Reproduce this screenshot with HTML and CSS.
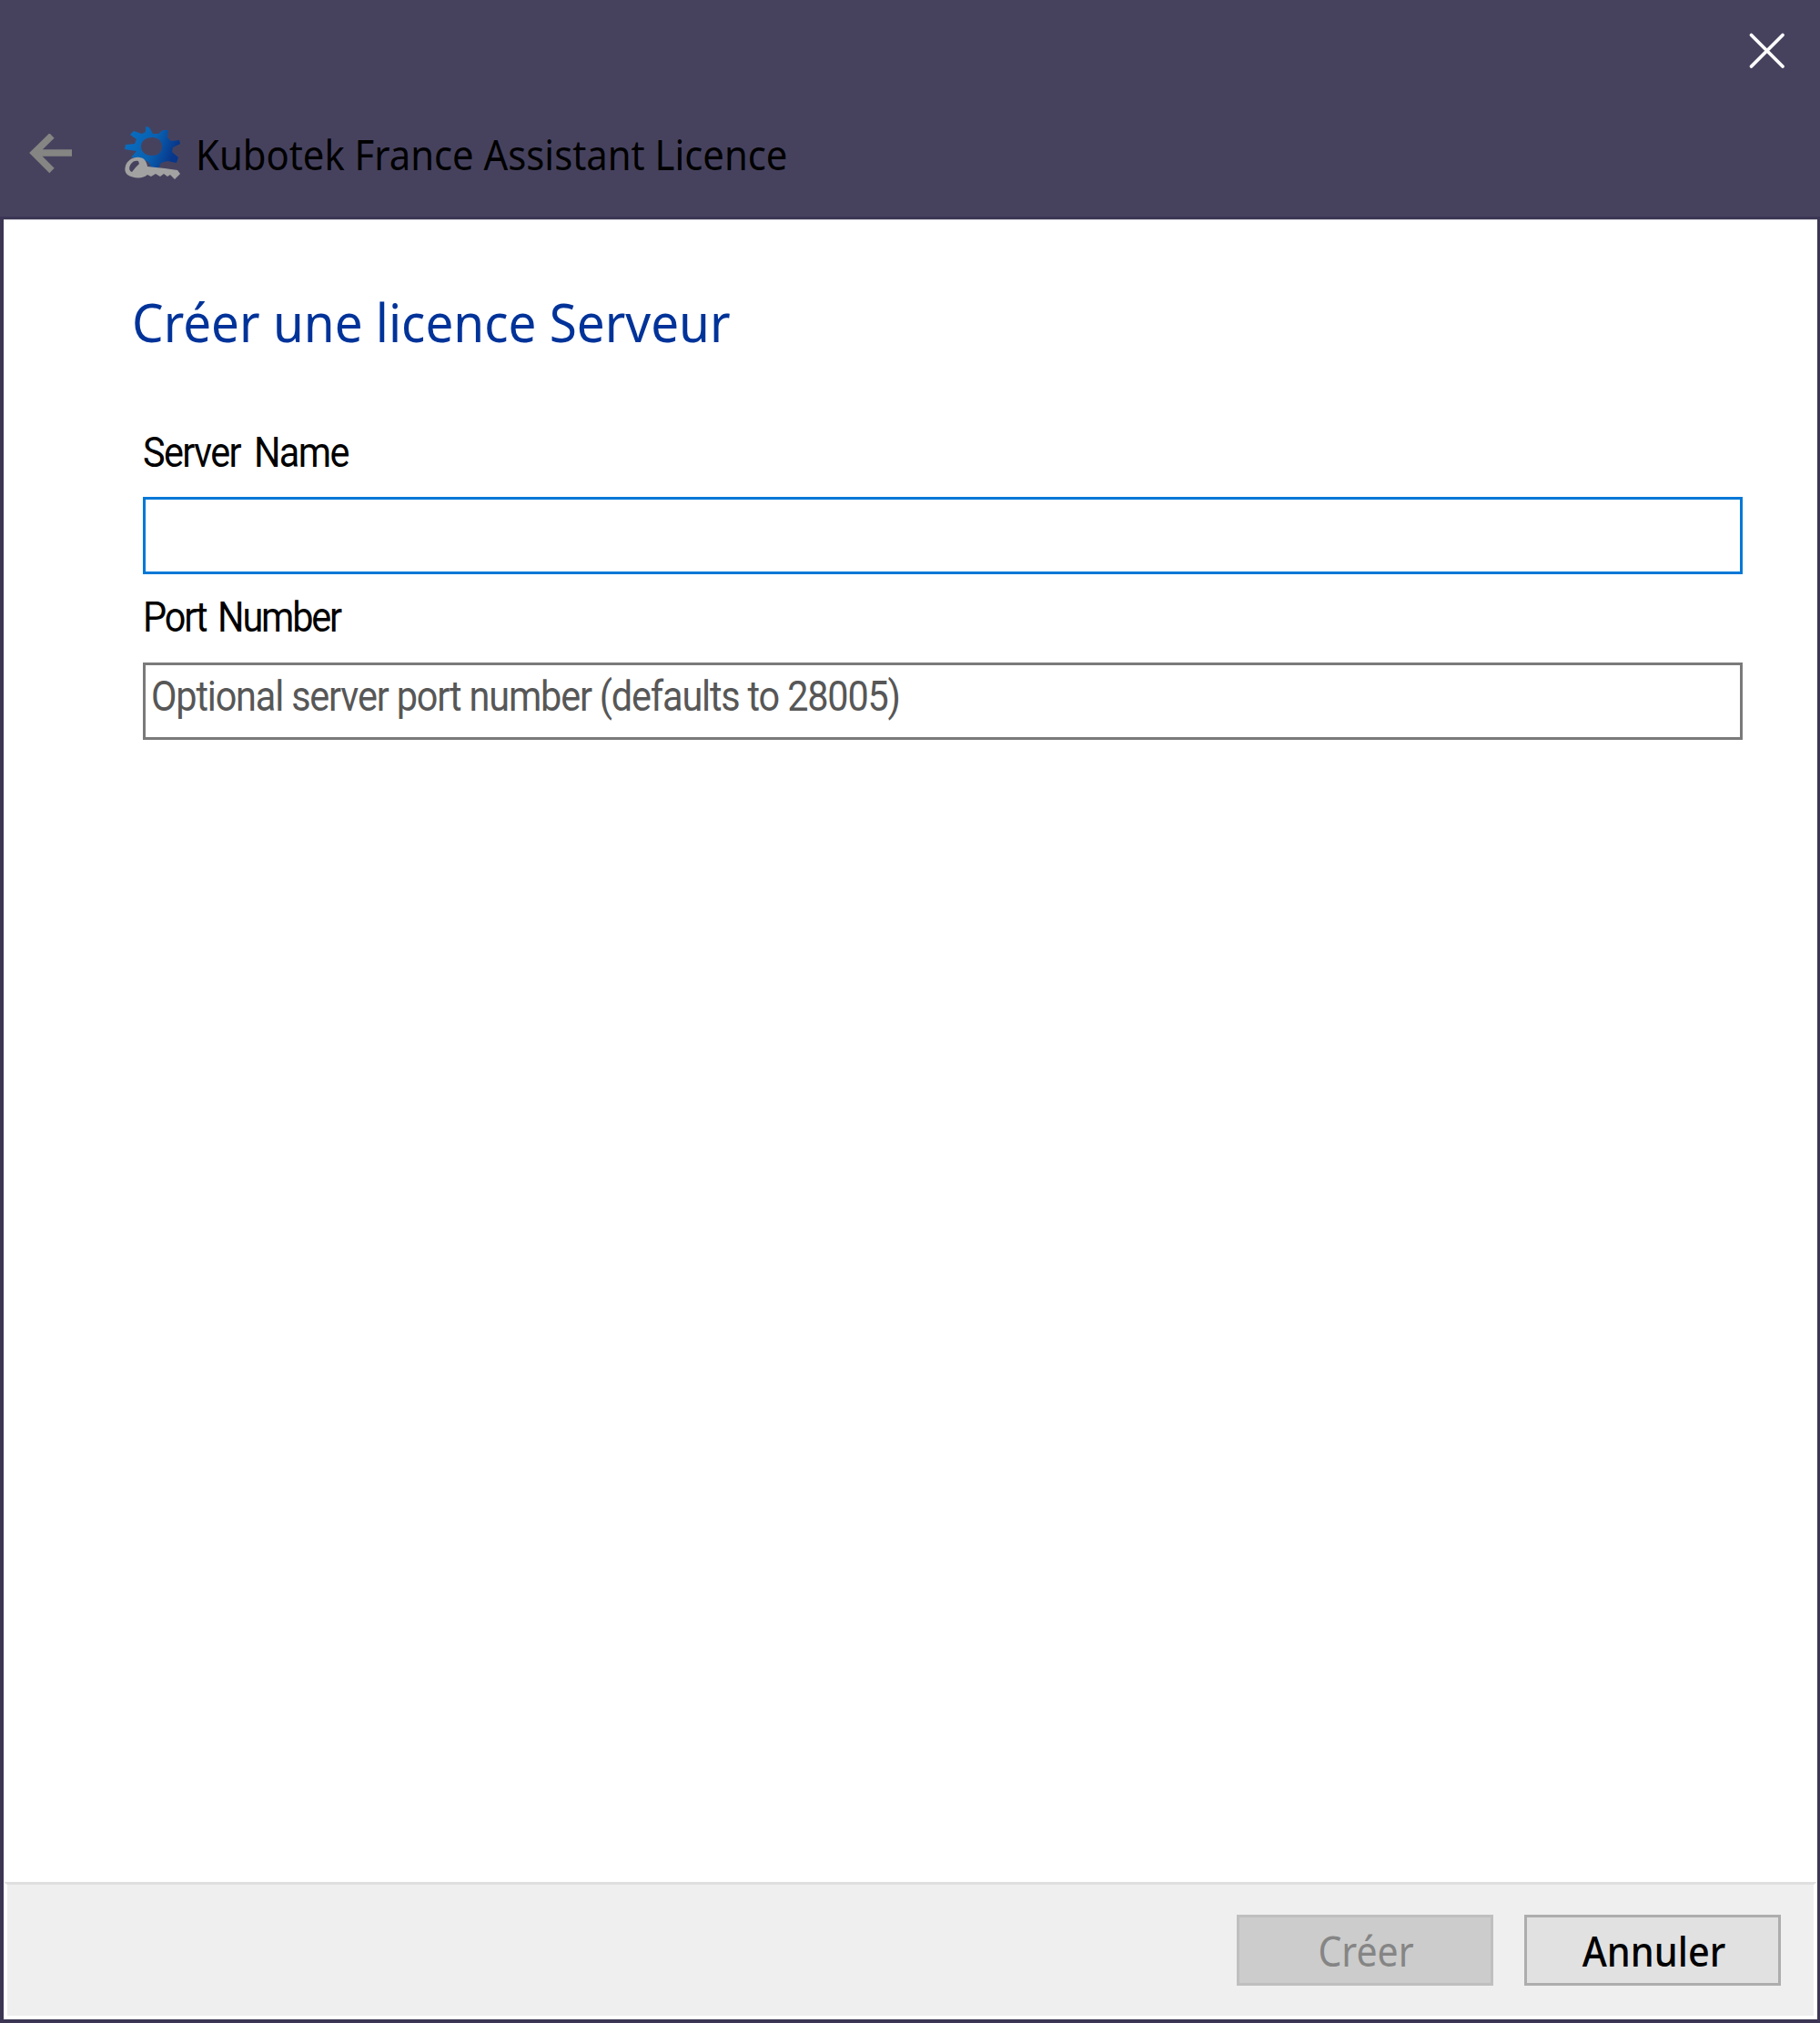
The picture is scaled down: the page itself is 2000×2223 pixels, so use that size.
FILE: index.html
```html
<!DOCTYPE html>
<html lang="fr">
<head>
<meta charset="utf-8">
<title>Kubotek France Assistant Licence</title>
<link rel="stylesheet" href="styles.css">
</head>
<body>
<div class="window">
  <header class="titlebar">
    <div class="caption">
      <svg class="close" viewBox="0 0 42 42"><path d="M3.500 3.500 38 38M38 3.500 3.500 38"/></svg>
    </div>
    <div class="nav">
      <svg class="back" viewBox="0 0 48 44"><path d="M47 21H5M25 2 5.500 21 25 40.500"/></svg>
      <svg class="app-icon" viewBox="0 0 64 64">
        <defs><linearGradient id="gear" x1="0" y1="0" x2="1" y2="0.3"><stop offset="0" stop-color="#0870c4"/><stop offset=".6" stop-color="#0960b0"/><stop offset="1" stop-color="#07368a"/></linearGradient></defs>
        <path fill="url(#gear)" fill-rule="evenodd" d="M24 2 28 3 32 10 38 10 43 6 49 6 48 14 52 18 61 17 62 21 54 25 53 30 60 36 58 42 48 40 41 42 38 48 31 48 27 41 18 37 8 36 14 29 1 27 2 22 12 21 14 16 7 11 11 7 20 10 24 8ZM31 14C24 14 19 18 19 24S24 34 31 34 42 30 42 24 38 14 31 14Z"/>
        <path fill="#a2a2a2" fill-rule="evenodd" d="M2 45C4 39 11 35 17 36 22 36 25 40 26 46L45 48 59 50 62 54 56 60 51 55 48 57 44 54 40 57 35 54 30 57 26 55C21 60 10 59 4 55 1 52 1 49 2 45ZM8 43C5 47 6 51 9 52L13 47 17 43 16 40C13 39 10 40 8 43Z"/>
      </svg>
      <span class="app-title">Kubotek France Assistant Licence</span>
    </div>
  </header>
  <main class="content">
    <h1 class="heading"><span>Créer une licence Serveur</span></h1>
    <label class="label label-server"><span>Server Name</span></label>
    <div class="field field-focus"></div>
    <label class="label label-port"><span>Port Number</span></label>
    <div class="field"><span class="placeholder">Optional server port number (defaults to 28005)</span></div>
  </main>
  <footer class="footer">
    <button class="btn btn-disabled"><span class="create-text">Créer</span></button>
    <button class="btn"><span class="cancel-text">Annuler</span></button>
  </footer>
</div>
</body>
</html>
```
FILE: styles.css
```css
* { box-sizing: border-box; }
body { margin: 0; background: #3c3654; font-family: "Noto Sans", "Open Sans", sans-serif; font-size: 46px; color: #000; }
.window { width: 2000px; height: 2223px; display: flex; flex-direction: column; padding: 0 3px 4px 4px; }
.window span { display: inline-block; white-space: nowrap; transform-origin: 0 50%; }
.titlebar { height: 241px; margin: 0 -3px 0 -4px; flex: none; background: #46425e; border-bottom: 3px solid #3c3654; }
.caption { height: 112px; display: flex; justify-content: flex-end; padding: 35px 37px 0 0; }
.close { width: 42px; height: 42px; fill: none; stroke: #fff; stroke-width: 3.800; stroke-linecap: round; }
.nav { height: 114px; display: flex; align-items: center; padding-left: 32px; }
.back { width: 48px; height: 44px; fill: none; stroke: #858583; stroke-width: 7.500; }
.app-icon { width: 64px; height: 64px; margin-left: 56px; }
.app-title { margin-left: 15px; line-height: 60px; transform: scaleX(.909); }
.content { flex: 1; background: #fff; padding: 74px 82px 0 153px; border-top: 1px solid #d8d6df; }
.heading { margin: 0 0 0 -12px; font-size: 58px; font-weight: 400; line-height: 76px; color: #039; }
.heading span { transform: scaleX(.945); }
.label { display: block; line-height: 60px; font-family: Roboto, sans-serif; }
.label-server { margin-top: 75px; height: 79px; }
.label-port { margin-top: 17px; height: 80px; }
.label span { transform: scaleX(.9); }
.label-server span { letter-spacing: -1.8px; word-spacing: 7px; }
.label-port span { letter-spacing: -2.4px; word-spacing: 5px; }
.field { height: 85px; border: 3px solid #7a7a7a; padding: 3px 0 0 6px; line-height: 62px; font-family: Roboto, sans-serif; }
.field-focus { border-color: #0078d7; }
.placeholder { color: #575757; transform: scaleX(.9); letter-spacing: -1.3px; }
.footer { height: 151px; flex: none; display: flex; justify-content: flex-end; gap: 34px; padding: 33px 36px 0; background: #efefef; border: 4px solid #fff; border-top: 3px solid #dfdfdf; }
.btn { width: 282px; height: 78px; border: 3px solid #adadad; background: #e1e1e1; padding: 0 0 0 2px; font: inherit; color: #000; }
.btn-disabled { border-color: #bfbfbf; background: #ccc; color: #858585; }
.window .btn span { transform-origin: 50% 50%; }
.create-text { transform: scaleX(.89); }
.cancel-text { transform: scaleX(.9); font-weight: 500; }
```
